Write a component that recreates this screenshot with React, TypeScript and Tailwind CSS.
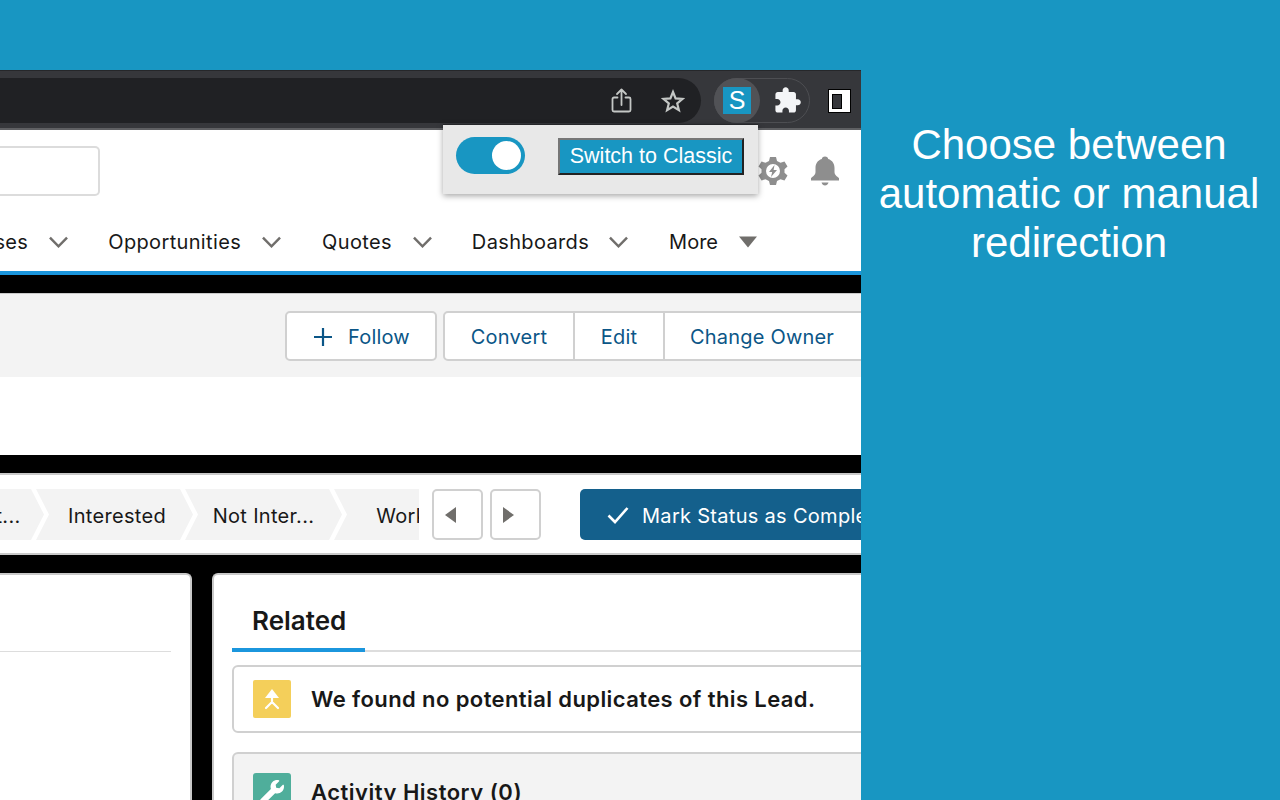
import React from "react";
import { FaWrench } from "react-icons/fa";

const sans = "font-['Inter','Noto_Sans',sans-serif]";

function Chevron() {
  return (
    <svg width="19" height="12" viewBox="0 0 20 12" className="shrink-0" fill="none" stroke="#706e6b" strokeWidth="2.6">
      <path d="M1 1.5 L10 10.5 L19 1.5" />
    </svg>
  );
}

function NavItem({ label, gap, chevronGap = "ml-[21px]" }: { label: string; gap: string; chevronGap?: string }) {
  return (
    <div className={`flex items-center shrink-0 ${gap}`}>
      <span className="text-[20px] tracking-[0.35px] pt-[2px] text-[#181818] whitespace-nowrap">{label}</span>
      <span className={`${chevronGap} pt-[2px]`}>
        <Chevron />
      </span>
    </div>
  );
}

function Stage({ label, pr = "", first = false }: { label: string; pr?: string; first?: boolean }) {
  return (
    <div
      className={`w-[157px] h-[51px] shrink-0 bg-[#f3f3f3] flex items-center justify-center -mr-[8px] whitespace-nowrap text-[20px] tracking-[0.3px] pt-[2px] text-[#181818] ${pr} ${first ? "-ml-[113px] [clip-path:polygon(0_0,144px_0,157px_50%,144px_100%,0_100%)]" : "[clip-path:polygon(0_0,144px_0,157px_50%,144px_100%,0_100%,13px_50%)]"}`}
    >
      {label}
    </div>
  );
}

export default function App() {
  return (
    <div className={`relative w-[1280px] h-[800px] overflow-hidden flex bg-[#1896c2] ${sans}`}>
      <div className="w-[861px] shrink-0 mt-[70px] flex flex-col bg-black overflow-hidden">
        {/* Browser toolbar */}
        <div className="h-[60px] shrink-0 bg-[#36373b] border-t border-[#26272a] border-b-[2px] border-b-[#5f6063] flex items-start pt-[7px]">
          <div className="w-[701px] h-[45px] shrink-0 bg-[#202124] rounded-r-[23px] flex items-center justify-end pr-[16px]">
            <svg width="24" height="26" viewBox="0 0 24 26" fill="none" stroke="#c4c7c5" strokeWidth="1.8" className="mr-[27px]" strokeLinecap="round" strokeLinejoin="round">
              <path d="M7.5 9.5 H4 a1.5 1.5 0 0 0 -1.5 1.5 V22 a1.5 1.5 0 0 0 1.5 1.5 H19 a1.5 1.5 0 0 0 1.5 -1.5 V11 a1.5 1.5 0 0 0 -1.5 -1.5 H15.5" />
              <path d="M11.5 17 V2 M7 6 L11.5 1.5 L16 6" />
            </svg>
            <svg width="24" height="24" viewBox="0 0 24 24" fill="none" stroke="#c4c7c5" strokeWidth="2.2" strokeLinejoin="miter">
              <path d="M12 3 L14.6 9.4 L21.5 9.9 L16.2 14.4 L17.9 21.1 L12 17.5 L6.1 21.1 L7.8 14.4 L2.5 9.9 L9.4 9.4 Z" />
            </svg>
          </div>
          <div className="ml-[13px] w-[96px] h-[45px] rounded-full border border-[#4d4e52] flex items-center relative">
            <div className="w-[46px] h-[45px] -ml-px -my-px rounded-full bg-[#515256] flex items-center justify-center shrink-0">
              <div className="w-[28px] h-[27px] bg-[#1896c2] flex items-center justify-center text-white text-[25px] font-['Liberation_Sans',sans-serif] leading-none">S</div>
            </div>
            <svg width="29" height="29" viewBox="0 0 24 24" className="ml-[13px] shrink-0" fill="#f4f5f7">
              <path d="M20.5 11H19V7c0-1.1-.9-2-2-2h-4V3.5C13 2.12 11.88 1 10.5 1S8 2.12 8 3.5V5H4c-1.1 0-1.99.9-1.99 2v3.8H3.5c1.49 0 2.7 1.21 2.7 2.7s-1.21 2.7-2.7 2.7H2V20c0 1.1.9 2 2 2h3.8v-1.5c0-1.49 1.21-2.7 2.7-2.7 1.49 0 2.7 1.21 2.7 2.7V22H17c1.1 0 2-.9 2-2v-4h1.5c1.38 0 2.5-1.12 2.5-2.5S21.88 11 20.5 11z" />
            </svg>
          </div>
          <div className="ml-[18px] mt-[11px] w-[23px] h-[24px] bg-white border border-black flex items-center pl-[3px]">
            <div className="w-[10px] h-[15px] bg-[#36373b] border border-black" />
          </div>
        </div>

        {/* Salesforce header */}
        <div className="h-[145px] shrink-0 bg-white border-b-[4px] border-[#1b96dd]">
          <div className="mt-[16px] h-[50px] flex items-center">
            <div className="w-[100px] h-[50px] border-y-2 border-r-2 border-[#dcdcdc] rounded-r-[5px]" />
            <div className="ml-auto flex items-center">
              <svg width="30" height="30" viewBox="0 0 30 30">
                <path
                  fill="#8e8e8e"
                  fillRule="evenodd"
                  d="M12 1 H18 L19 5 L22.5 6.8 L26.5 5.5 L29.5 10.5 L26.5 13.2 V16.8 L29.5 19.5 L26.5 24.5 L22.5 23.2 L19 25 L18 29 H12 L11 25 L7.5 23.2 L3.5 24.5 L0.5 19.5 L3.5 16.8 V13.2 L0.5 10.5 L3.5 5.5 L7.5 6.8 L11 5 Z M15 8 A7 7 0 1 0 15 22 A7 7 0 1 0 15 8 Z"
                />
                <path fill="#8e8e8e" d="M16.5 9 L11 16 H14.2 L13 21 L19 14 H15.6 Z" />
              </svg>
              <svg width="30" height="30" viewBox="0 0 30 30" className="ml-[22px] mr-[21px]">
                <path fill="#8e8e8e" d="M15 0.5 C17 0.5 18 1.7 18.2 3 C22.5 4.3 24.5 8 24.5 12 V16 C24.5 19 27 20.5 29 22 V24.5 H1 V22 C3 20.5 5.5 19 5.5 16 V12 C5.5 8 7.5 4.3 11.8 3 C12 1.7 13 0.5 15 0.5 Z" />
                <path fill="#8e8e8e" d="M11.5 26.5 H18.5 C18 28.5 16.5 29.5 15 29.5 C13.5 29.5 12 28.5 11.5 26.5 Z" />
              </svg>
            </div>
          </div>
          <div className="mt-[15px] h-[60px] flex items-center justify-end pr-[104px]">
            <NavItem label="Cases" gap="mr-[40px]" />
            <NavItem label="Opportunities" gap="mr-[41px]" />
            <NavItem label="Quotes" gap="mr-[40px]" />
            <NavItem label="Dashboards" gap="mr-[41px]" chevronGap="ml-[20px]" />
            <div className="flex items-center shrink-0">
              <span className="text-[20px] pt-[2px] text-[#181818]">More</span>
              <svg width="18" height="12" viewBox="0 0 18 12" className="ml-[21px] mt-[2px]">
                <path fill="#706e6b" d="M0 0.5 H18 L9 11.5 Z" />
              </svg>
            </div>
          </div>
        </div>

        {/* Highlights */}
        <div className="mt-[18px] h-[162px] shrink-0 bg-white border-t border-[#c9c9c9]">
          <div className="h-[83px] bg-[#f3f3f3] pt-[17px] flex">
            <div className="ml-[285px] w-[152px] h-[50px] shrink-0 bg-white border-2 border-[#d0d0d0] rounded-[5px] flex items-center text-[20px] tracking-[0.2px] text-[#0b5687]">
              <svg width="20" height="20" viewBox="0 0 20 20" stroke="#0b5687" strokeWidth="2.2" className="ml-[26px] mt-[2px]">
                <path d="M10 1 V19 M1 10 H19" />
              </svg>
              <span className="ml-[15px] pt-[2px]">Follow</span>
            </div>
            <div className="ml-[6px] h-[50px] w-[430px] shrink-0 bg-white border-2 border-[#d0d0d0] rounded-l-[5px] flex items-center text-[20px] tracking-[0.2px] text-[#0b5687] whitespace-nowrap">
              <div className="w-[130px] h-full flex items-center justify-center pt-[2px] border-r-2 border-[#d0d0d0]">Convert</div>
              <div className="w-[90px] h-full flex items-center justify-center pt-[2px] border-r-2 border-[#d0d0d0]">Edit</div>
              <div className="pl-[25px] pt-[2px]">Change Owner</div>
            </div>
          </div>
        </div>

        {/* Path */}
        <div className="mt-[18px] h-[82px] shrink-0 bg-white border-y-2 border-[#c9c9c9] pt-[14px] flex items-start">
          <div className="w-[419px] h-[51px] shrink-0 overflow-hidden flex">
            <Stage label="Attempt..." first pr="pl-[16px]" />
            <Stage label="Interested" pr="pl-[5px]" />
            <Stage label="Not Inter..." />
            <Stage label="Working" pr="pl-[8px]" />
          </div>
          <button className="ml-[13px] w-[51px] h-[51px] shrink-0 bg-white border-2 border-[#d0d0d0] rounded-[5px] flex items-center pl-[10px]">
            <svg width="12" height="18" viewBox="0 0 12 18"><path fill="#706e6b" d="M12 1 V17 L1 9 Z" /></svg>
          </button>
          <button className="ml-[7px] w-[51px] h-[51px] shrink-0 bg-white border-2 border-[#d0d0d0] rounded-[5px] flex items-center pl-[11px]">
            <svg width="12" height="18" viewBox="0 0 12 18"><path fill="#706e6b" d="M0 1 V17 L11 9 Z" /></svg>
          </button>
          <div className="ml-[39px] w-[400px] h-[51px] shrink-0 bg-[#14608c] rounded-l-[5px] flex items-center text-white text-[20px] tracking-[0.3px] whitespace-nowrap">
            <svg width="22" height="18" viewBox="0 0 22 18" fill="none" stroke="white" strokeWidth="2.6" className="ml-[27px]">
              <path d="M1.5 9.5 L8 16 L20.5 2" />
            </svg>
            <span className="ml-[13px] pt-[2px]">Mark Status as Complete</span>
          </div>
        </div>

        {/* Cards */}
        <div className="mt-[18px] flex-1 flex gap-[20px] min-h-0">
          <div className="w-[192px] h-[300px] shrink-0 bg-white border-t-2 border-r-2 border-[#c9c9c9] rounded-tr-[6px] pt-[76px] pr-[19px]">
            <div className="h-px bg-[#dddddd]" />
          </div>
          <div className="w-[700px] h-[300px] shrink-0 bg-white border-t-2 border-l-2 border-[#c9c9c9] rounded-tl-[6px] pl-[18px]">
            <div className="h-[77px] border-b-2 border-[#dddddd] flex">
              <div className="w-[133px] h-[77px] border-b-[4px] border-[#1b96dd] pl-[20px] pt-[28px] text-[26px] leading-[36px] font-semibold text-[#181818] shrink-0">Related</div>
            </div>
            <div className="mt-[13px] h-[68px] bg-white border-2 border-[#d0d0d0] rounded-[6px] flex items-center whitespace-nowrap">
              <div className="ml-[19px] w-[38px] h-[38px] rounded-[2px] bg-[#f4cf5a] flex items-center justify-center shrink-0">
                <svg width="20" height="24" viewBox="0 0 20 24" fill="none" stroke="white" strokeWidth="2.2" strokeLinecap="round">
                  <path fill="white" stroke="none" d="M10 2 L17 11 H3 Z" />
                  <path d="M10 10 V15 M10 15 L4 21 M10 15 L16 21" />
                </svg>
              </div>
              <span className="ml-[20px] text-[22px] tracking-[0.4px] font-semibold text-[#181818]">We found no potential duplicates of this Lead.</span>
            </div>
            <div className="mt-[19px] h-[100px] bg-[#f3f3f3] border-2 border-[#d0d0d0] rounded-[6px] flex items-start pt-[19px] whitespace-nowrap">
              <div className="ml-[19px] w-[38px] h-[38px] rounded-[3px] bg-[#4fae9b] flex items-center justify-center shrink-0">
                <FaWrench className="text-white w-[24px] h-[24px]" />
              </div>
              <span className="ml-[20px] text-[22px] tracking-[0.5px] leading-[38px] font-semibold text-[#181818]">Activity History (0)</span>
            </div>
          </div>
        </div>
      </div>

      {/* Caption */}
      <div className="flex-1 pt-[120px] pr-[3px] text-center text-white text-[42px] leading-[49px] font-['Liberation_Sans',sans-serif]">
        <div>Choose between</div>
        <div>automatic or manual</div>
        <div>redirection</div>
      </div>

      {/* Extension popup */}
      <div className="absolute left-[443px] top-[124px] w-[315px] h-[70px] bg-[#e8e8e8] border-t border-[#26272a] shadow-[0_2px_6px_rgba(0,0,0,0.35)] flex items-start pl-[13px] pt-[12px]">
        <div className="w-[69px] h-[37px] rounded-full bg-[#1896c2] flex items-center justify-end pr-[4px] shrink-0">
          <div className="w-[29px] h-[29px] rounded-full bg-white" />
        </div>
        <button className="ml-[33px] mt-px w-[186px] h-[37px] shrink-0 bg-[#1896c2] border-2 border-t-[#767676] border-l-[#767676] border-r-[#222222] border-b-[#222222] text-white text-[21.5px] leading-none whitespace-nowrap font-['Liberation_Sans',sans-serif]">
          Switch to Classic
        </button>
      </div>
    </div>
  );
}
